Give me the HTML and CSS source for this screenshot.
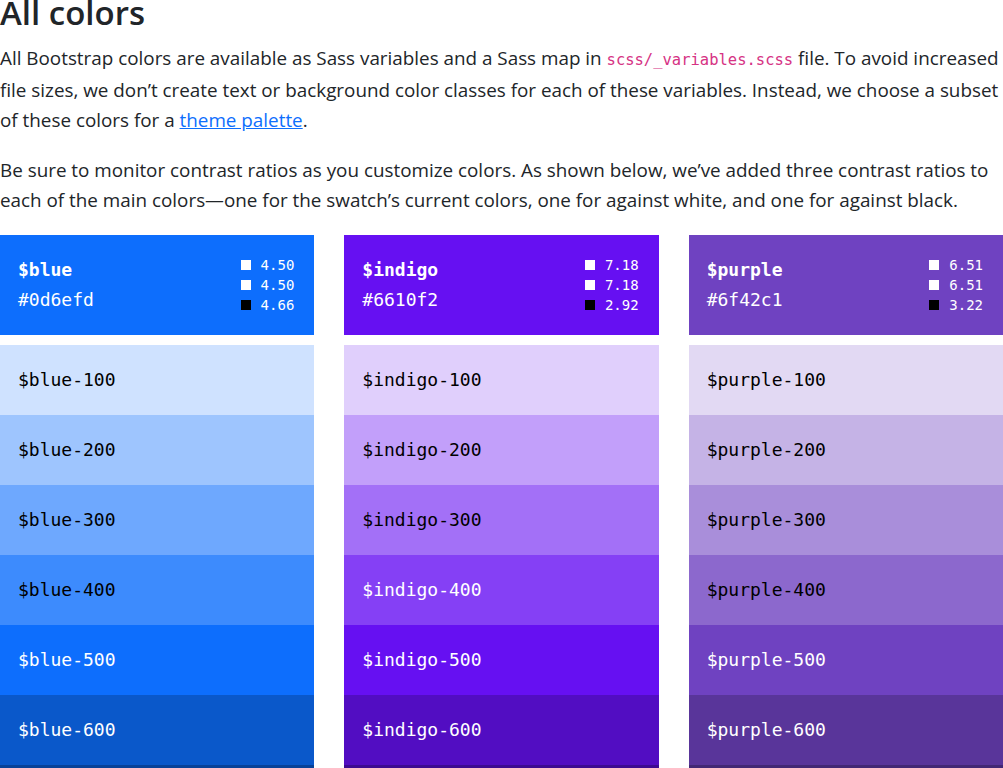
FILE: index.html
```html
<!DOCTYPE html>
<html lang="en">
<head>
<meta charset="utf-8">
<title>All colors</title>
<link rel="stylesheet" href="styles.css">
</head>
<body>
<main class="content">
  <h2 class="title">All colors</h2>
  <p class="lead-text">All Bootstrap colors are available as Sass variables and a Sass map in <code>scss/_variables.scss</code> file. To avoid increased file sizes, we don’t create text or background color classes for each of these variables. Instead, we choose a subset of these colors for a <a href="#">theme palette</a>.</p>
  <p class="lead-text">Be sure to monitor contrast ratios as you customize colors. As shown below, we’ve added three contrast ratios to each of the main colors—one for the swatch’s current colors, one for against white, and one for against black.</p>

  <div class="swatches">
    <div class="swatch">
      <div class="swatch-head bg-blue">
        <div class="name">
          <div class="var">$blue</div>
          <div class="hex">#0d6efd</div>
        </div>
        <div class="ratios">
          <div class="ratio"><span class="sq sq-white"></span>4.50</div>
          <div class="ratio"><span class="sq sq-white"></span>4.50</div>
          <div class="ratio"><span class="sq sq-black"></span>4.66</div>
        </div>
      </div>
      <div class="row c-blue-100 dark">$blue-100</div>
      <div class="row c-blue-200 dark">$blue-200</div>
      <div class="row c-blue-300 dark">$blue-300</div>
      <div class="row c-blue-400 dark">$blue-400</div>
      <div class="row c-blue-500 light">$blue-500</div>
      <div class="row c-blue-600 light">$blue-600</div>
      <div class="row c-blue-700 light">$blue-700</div>
    </div>

    <div class="swatch">
      <div class="swatch-head bg-indigo">
        <div class="name">
          <div class="var">$indigo</div>
          <div class="hex">#6610f2</div>
        </div>
        <div class="ratios">
          <div class="ratio"><span class="sq sq-white"></span>7.18</div>
          <div class="ratio"><span class="sq sq-white"></span>7.18</div>
          <div class="ratio"><span class="sq sq-black"></span>2.92</div>
        </div>
      </div>
      <div class="row c-indigo-100 dark">$indigo-100</div>
      <div class="row c-indigo-200 dark">$indigo-200</div>
      <div class="row c-indigo-300 dark">$indigo-300</div>
      <div class="row c-indigo-400 light">$indigo-400</div>
      <div class="row c-indigo-500 light">$indigo-500</div>
      <div class="row c-indigo-600 light">$indigo-600</div>
      <div class="row c-indigo-700 light">$indigo-700</div>
    </div>

    <div class="swatch">
      <div class="swatch-head bg-purple">
        <div class="name">
          <div class="var">$purple</div>
          <div class="hex">#6f42c1</div>
        </div>
        <div class="ratios">
          <div class="ratio"><span class="sq sq-white"></span>6.51</div>
          <div class="ratio"><span class="sq sq-white"></span>6.51</div>
          <div class="ratio"><span class="sq sq-black"></span>3.22</div>
        </div>
      </div>
      <div class="row c-purple-100 dark">$purple-100</div>
      <div class="row c-purple-200 dark">$purple-200</div>
      <div class="row c-purple-300 dark">$purple-300</div>
      <div class="row c-purple-400 dark">$purple-400</div>
      <div class="row c-purple-500 light">$purple-500</div>
      <div class="row c-purple-600 light">$purple-600</div>
      <div class="row c-purple-700 light">$purple-700</div>
    </div>
  </div>
</main>
</body>
</html>
```
FILE: styles.css
```css
html, body {
  margin: 0;
  padding: 0;
  background: #fff;
}
body {
  font-family: "Open Sans", "Noto Sans", sans-serif;
  color: #212529;
  font-size: 18.85px;
  line-height: 30px;
}
.content {
  width: 1003px;
}
.title {
  font-family: "Open Sans", sans-serif;
  font-weight: 600;
  font-size: 33px;
  line-height: 40px;
  margin: -7px 0 10px;
}
.lead-text {
  margin: 0 0 20px;
}
code {
  font-family: "DejaVu Sans Mono", monospace;
  font-size: 15.5px;
  color: #d63384;
}
a {
  color: #0d6efd;
  text-decoration: underline;
}
.swatches {
  display: grid;
  grid-template-columns: repeat(3, 1fr);
  column-gap: 30px;
  margin-top: 17px;
}
.swatch {
  display: flex;
  flex-direction: column;
}
.swatch-head {
  display: flex;
  justify-content: space-between;
  align-items: flex-start;
  padding: 20px 20px 20px 18px;
  margin-bottom: 10px;
  color: #fff;
  font-family: "DejaVu Sans Mono", monospace;
  font-size: 18px;
  line-height: 30px;
}
.var {
  font-weight: bold;
}
.ratios {
  font-size: 14px;
  line-height: 20px;
}
.ratio {
  display: flex;
  align-items: center;
}
.sq {
  display: inline-block;
  width: 10px;
  height: 10px;
  margin-right: 10px;
}
.sq-white { background: #fff; }
.sq-black { background: #000; }
.bg-blue { background: #0d6efd; }
.bg-indigo { background: #6610f2; }
.bg-purple { background: #6f42c1; }
.row {
  height: 70px;
  box-sizing: border-box;
  padding: 20px 18px;
  font-family: "DejaVu Sans Mono", monospace;
  font-size: 18px;
  line-height: 30px;
}
.dark { color: #000; }
.light { color: #fff; }
.c-blue-100 { background: #cfe2ff; }
.c-blue-200 { background: #9ec5fe; }
.c-blue-300 { background: #6ea8fe; }
.c-blue-400 { background: #3d8bfd; }
.c-blue-500 { background: #0d6efd; }
.c-blue-600 { background: #0a58ca; }
.c-blue-700 { background: #084298; }
.c-indigo-100 { background: #e0cffc; }
.c-indigo-200 { background: #c29ffa; }
.c-indigo-300 { background: #a370f7; }
.c-indigo-400 { background: #8540f5; }
.c-indigo-500 { background: #6610f2; }
.c-indigo-600 { background: #520dc2; }
.c-indigo-700 { background: #3d0a91; }
.c-purple-100 { background: #e2d9f3; }
.c-purple-200 { background: #c5b3e6; }
.c-purple-300 { background: #a98eda; }
.c-purple-400 { background: #8c68cd; }
.c-purple-500 { background: #6f42c1; }
.c-purple-600 { background: #59359a; }
.c-purple-700 { background: #432874; }
```
